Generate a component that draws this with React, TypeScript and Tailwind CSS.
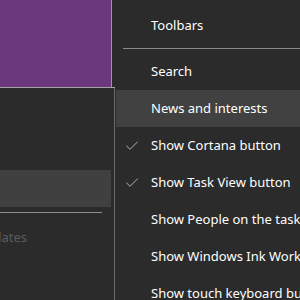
import { Check } from "lucide-react";

type MenuItem = {
  label: string;
  checked?: boolean;
  active?: boolean;
};

const topItems: MenuItem[] = [{ label: "Toolbars" }];

const items: MenuItem[] = [
  { label: "Search" },
  { label: "News and interests", active: true },
  { label: "Show Cortana button", checked: true },
  { label: "Show Task View button", checked: true },
  { label: "Show People on the taskbar" },
  { label: "Show Windows Ink Workspace button" },
  { label: "Show touch keyboard button" },
];

function Row({ item }: { item: MenuItem }) {
  return (
    <div
      className={`flex h-[37px] shrink-0 items-center whitespace-nowrap pt-px ${
        item.active ? "ml-px bg-[#414141] pl-[35px]" : "pl-[36px]"
      }`}
    >
      <span className="relative text-[13px] text-white">
        {item.checked && (
          <Check
            className="absolute left-[-27px] top-1/2 -translate-y-1/2 text-[#b9c8dc]"
            size={16}
            strokeWidth={1.3}
          />
        )}
        {item.label}
      </span>
    </div>
  );
}

export default function App() {
  return (
    <div
      className="flex h-[300px] w-[300px] overflow-hidden bg-[#2b2b2b]"
      style={{ fontFamily: '"Noto Sans", "Open Sans", sans-serif' }}
    >
      <div className="flex w-[115px] shrink-0 flex-col">
        <div className="h-[87px] w-[112px] shrink-0 border-r border-[#a58fae] bg-[#6b397b]" />
        <div className="h-px w-[115px] shrink-0 bg-[#a3a3a3]" />
        <div className="flex flex-1 flex-col overflow-hidden border-r border-[#6b6b6b]">
          <div className="h-[82px] shrink-0" />
          <div className="h-[37px] w-[111px] shrink-0 bg-[#404040]" />
          <div className="mt-[5px] h-px w-[102px] shrink-0 bg-[#8c8c8c]" />
          <div className="mt-[15px] flex w-[27px] justify-end whitespace-nowrap text-[13px] text-[#5c5c5c]">
            Check for updates
          </div>
        </div>
      </div>

      <div className="flex flex-1 flex-col pt-[7px]">
        {topItems.map((item) => (
          <Row key={item.label} item={item} />
        ))}
        <div className="ml-[8px] mt-[4px] mb-[4px] h-px shrink-0 bg-[#8a8a8a]" />
        {items.map((item) => (
          <Row key={item.label} item={item} />
        ))}
      </div>
    </div>
  );
}
